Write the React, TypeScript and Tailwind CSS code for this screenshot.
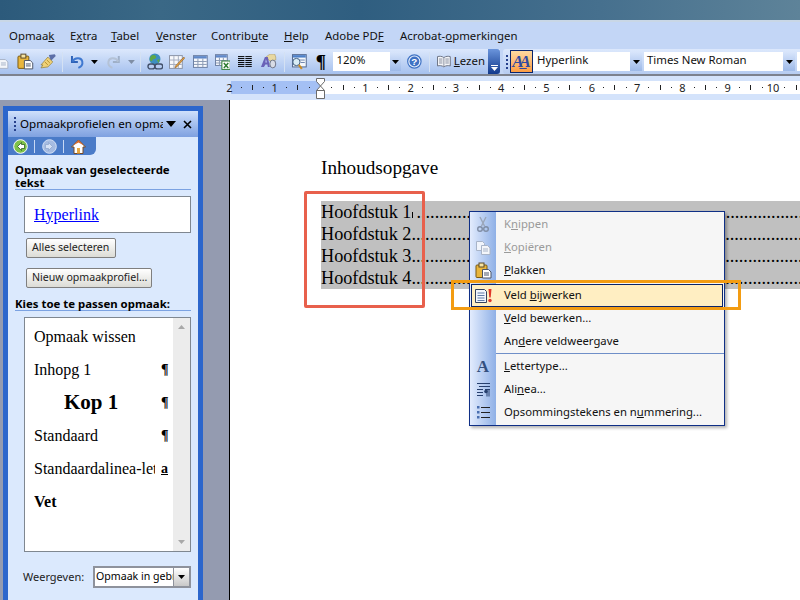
import React from 'react';

const ui = "font-['Noto_Sans',sans-serif]";
const times = "font-['Liberation_Serif',serif]";

const Sep = ({ className = '' }: { className?: string }) => (
  <div className={`h-[20px] w-px bg-[#6f9bd8] border-r border-white/70 ${className}`} />
);

const Arrow = ({ className = '', color = '#000' }: { className?: string; color?: string }) => (
  <svg width="7" height="4" viewBox="0 0 7 4" className={className}><path d="M0 0h7L3.5 4z" fill={color} /></svg>
);

const PasteIcon = ({ className = '' }: { className?: string }) => (
  <svg width="17" height="17" viewBox="0 0 17 17" className={className}>
    <rect x="1" y="3" width="11" height="12.5" rx="1" fill="#e8b53c" stroke="#7a5a12" />
    <rect x="4" y="1" width="5" height="4" fill="#f6e3a0" stroke="#5b4a2a" />
    <path d="M7.5 7.5h6l2.5 2.5v6h-8.500z" fill="#fff" stroke="#4b5568" />
    <path d="M9 11h5M9 13h5" stroke="#4b5568" />
  </svg>
);

const CopyIcon = () => (
  <svg width="16" height="16" viewBox="0 0 16 16">
    <path d="M1.500 1.500h6l2 2v7h-8z" fill="#f0f4fb" stroke="#a8b4c8" />
    <path d="M6.500 5.500h6l2.500 2.500v6.500h-8.500z" fill="#f4f6fa" stroke="#a8b4c8" />
    <path d="M8 9h5M8 11h5" stroke="#a8b4c8" />
  </svg>
);

const TableIcon = ({ className = '' }: { className?: string }) => (
  <svg width="15" height="15" viewBox="0 0 15 15" className={className}>
    <rect x="0.500" y="1.500" width="14" height="12" fill="#f6f8fc" stroke="#6c7fa3" />
    <rect x="1" y="2" width="13" height="2.500" fill="#5f88c9" />
    <path d="M5 4.500v9M10 4.500v9M1 7.500h13M1 10.500h13" stroke="#8b9ab5" />
  </svg>
);

const MenuIcon = ({ name }: { name: string }) => {
  if (name === 'cut')
    return (
      <svg width="16" height="17" viewBox="0 0 16 17">
        <path d="M5 1l4.500 9M11 1L6.500 10" stroke="#9aa5b8" strokeWidth="1.400" fill="none" />
        <circle cx="5" cy="13" r="2.300" fill="none" stroke="#7f8da5" strokeWidth="1.400" />
        <circle cx="11" cy="13" r="2.300" fill="none" stroke="#7f8da5" strokeWidth="1.400" />
      </svg>
    );
  if (name === 'copy') return <CopyIcon />;
  if (name === 'paste') return <PasteIcon />;
  if (name === 'update')
    return (
      <svg width="18" height="16" viewBox="0 0 18 16">
        <path d="M0.500 1.500h9l2 2v11h-11z" fill="#f2f6fd" stroke="#33415e" />
        <path d="M2.500 5h7M2.500 7.500h7M2.500 10h7M2.500 12.500h7" stroke="#5f7ba8" />
        <path d="M13.500 1h3l-.8 8.500h-1.400z" fill="#e0372a" />
        <circle cx="15" cy="12.500" r="1.700" fill="#e0372a" />
      </svg>
    );
  if (name === 'font')
    return <span className={`${times} text-[17px] leading-none font-bold text-[#34507f]`}>A</span>;
  if (name === 'para')
    return (
      <svg width="15" height="15" viewBox="0 0 15 15">
        <path d="M1 1.500h13M3 4.500h11M1 7.500h6M1 10.500h6M1 13.500h6" stroke="#27406e" />
        <path d="M9 7.500h5M11 7.500v7M13 7.500v7" stroke="#27406e" />
        <circle cx="10" cy="9.500" r="1.800" fill="#27406e" />
      </svg>
    );
  if (name === 'list')
    return (
      <svg width="15" height="15" viewBox="0 0 15 15">
        <path d="M5 2.500h9M5 7.500h9M5 12.500h9" stroke="#222" />
        <rect x="1" y="1" width="2.500" height="2.500" fill="#4a6fb0" />
        <rect x="1" y="6" width="2.500" height="2.500" fill="#4a6fb0" />
        <rect x="1" y="11" width="2.500" height="2.500" fill="#4a6fb0" />
      </svg>
    );
  return null;
};

const menuBar: [string, string, string, string][] = [
  ['Opmaa', 'k', '', 'w-[61px]'],
  ['E', 'x', 'tra', 'w-[41px]'],
  ['', 'T', 'abel', 'w-[45px]'],
  ['', 'V', 'enster', 'w-[55px]'],
  ['Contrib', 'u', 'te', 'w-[73px]'],
  ['', 'H', 'elp', 'w-[41px]'],
  ['Adobe PD', 'F', '', 'w-[75px]'],
  ['Acrobat-', 'o', 'pmerkingen', 'w-[130px]'],
];

const MenuItem = ({
  icon,
  pre,
  hot,
  post,
  disabled,
  active,
  className = '',
}: {
  icon: string;
  pre: string;
  hot: string;
  post: string;
  disabled?: boolean;
  active?: boolean;
  className?: string;
}) => (
  <div
    className={`flex h-[23px] items-center text-[11.3px] ${disabled ? 'text-[#9a9a9a]' : 'text-[#111]'} ${
      active ? 'bg-[#ffeec2] outline outline-1 -outline-offset-1 outline-[#0a246a] mx-px' : ''
    } ${className}`}
  >
    <div className={`flex shrink-0 items-center justify-center ${active ? 'w-[25px]' : 'w-[26px]'}`}>
      <MenuIcon name={icon} />
    </div>
    <span className="ml-[8px] whitespace-nowrap">
      {pre}
      <u>{hot}</u>
      {post}
    </span>
  </div>
);

const StyleItem = ({
  children,
  glyph,
  className = '',
}: {
  children: React.ReactNode;
  glyph?: string;
  className?: string;
}) => (
  <div className={`flex h-[33px] items-center pl-[9px] text-[16px] text-black ${times} ${className}`}>
    <div className="flex-1 overflow-hidden whitespace-nowrap">{children}</div>
    <span className="ml-[6px] mr-[3px] w-[9px] shrink-0 text-[14px] font-bold leading-none text-black">
      {glyph === 'a' ? <u>a</u> : glyph}
    </span>
  </div>
);

const Btn = ({ children, className = '' }: { children: React.ReactNode; className?: string }) => (
  <div
    className={`flex h-[20px] items-center whitespace-nowrap rounded-[2px] border border-[#7f7f7f] bg-gradient-to-b from-white to-[#dcdcd6] pl-[5px] text-[10.6px] text-[#222] ${className}`}
  >
    {children}
  </div>
);

const Ruler = () => {
  const unit = 45.3;
  const origin = 320;
  const labels: [number, string][] = [
    [-2, '2'],
    [-1, '1'],
    [1, '1'],
    [2, '2'],
    [3, '3'],
    [4, '4'],
    [5, '5'],
    [6, '6'],
    [7, '7'],
    [8, '8'],
    [9, '9'],
    [10, '10'],
  ];
  const marks: React.ReactNode[] = [];
  for (let i = -8; i <= 44; i++) {
    if (i % 4 === 0) continue;
    const x = Math.round(origin + (i * unit) / 4);
    marks.push(
      i % 2 === 0 ? (
        <rect key={i} x={x} y={85} width={1} height={5} fill="#222" />
      ) : (
        <rect key={i} x={x} y={87} width={1} height={1} fill="#222" />
      ),
    );
  }
  return (
    <svg width="800" height="24" viewBox="0 76 800 24" className="block shrink-0">
      <rect x="0" y="76" width="800" height="24" fill="#d4e3fb" />
      <rect x="231" y="81" width="89" height="13" fill="#a4c0f4" />
      <rect x="320" y="81" width="480" height="13" fill="#fff" />
      {marks}
      {labels.map(([n, t]) => (
        <text
          key={t + n}
          x={origin + n * unit}
          y={91.500}
          textAnchor="middle"
          fontSize="11"
          fontFamily="Noto Sans, sans-serif"
          fill="#222"
        >
          {t}
        </text>
      ))}
      <path d="M316.500 78.500h8v3l-4 4.500 4 4.500v8h-8v-8l4-4.500-4-4.500z" fill="#fff" stroke="#6b6b6b" />
      <path d="M316.500 90.500h8" stroke="#6b6b6b" />
    </svg>
  );
};

export default function App() {
  return (
    <div className={`relative flex h-[600px] w-[800px] flex-col overflow-hidden ${ui}`}>
      <div className="h-[20px] shrink-0 bg-[linear-gradient(90deg,#2c5a7b_0%,#3a6886_20%,#2f5e80_45%,#46708e_75%,#5e8399_100%)]" />
      <div className="h-[2px] shrink-0 bg-[#c9d7e6]" />

      <div className="flex h-[27px] shrink-0 items-center bg-[#c3d6f6] pl-[9px] text-[11.4px] text-[#111]">
        {menuBar.map(([pre, hot, post, w]) => (
          <span key={pre + hot + post} className={`${w} whitespace-nowrap`}>
            {pre}
            <u>{hot}</u>
            {post}
          </span>
        ))}
      </div>

      <div className="flex h-[25px] shrink-0 bg-[#c3d6f6]">
        {/* standard toolbar */}
        <div className="flex h-full w-[500px] shrink-0 items-center bg-gradient-to-b from-[#dce8fc] to-[#a6c1ee]">
          <svg width="9" height="16" viewBox="7 0 9 16">
            <path d="M6.500 5.500h6l2.500 2.500v6.500h-8.500z" fill="#f4f6fa" stroke="#a8b4c8" />
            <path d="M8 9h5M8 11h5" stroke="#a8b4c8" />
          </svg>
          <PasteIcon className="ml-[8px]" />
          <svg width="17" height="16" viewBox="0 0 17 16" className="ml-[6px]">
            <path d="M9 1l6-1 1 2-5 5z" fill="#5c6fa8" />
            <path d="M8 3l5 5-5 5-7 1 2-3-2 0z" fill="#f0d277" stroke="#8d7a3a" strokeWidth="0.700" />
            <path d="M5 8l3 3M7 6l3 3" stroke="#b58f2c" />
          </svg>
          <Sep className="ml-[6px]" />
          <svg width="15" height="15" viewBox="0 0 15 15" className="ml-[7px]">
            <path d="M2 2v6h6" fill="none" stroke="#2f63b8" strokeWidth="2" />
            <path d="M2.500 7.500c2-4 9-5 10 0 .6 3-1.500 5.500-4 6.500" fill="none" stroke="#3f78d0" strokeWidth="2" />
          </svg>
          <Arrow className="ml-[6px]" />
          <svg width="15" height="15" viewBox="0 0 15 15" className="ml-[8px]">
            <path d="M13 2v6H7" fill="none" stroke="#9fb0c8" strokeWidth="2" />
            <path d="M12.500 7.500c-2-4-9-5-10 0-.6 3 1.500 5.500 4 6.500" fill="none" stroke="#b4c2d6" strokeWidth="2" />
          </svg>
          <Arrow className="ml-[7px]" color="#7f8ea5" />
          <Sep className="ml-[5px]" />
          <svg width="17" height="18" viewBox="0 0 17 18" className="ml-[6px]">
            <circle cx="8" cy="6" r="5.700" fill="#3d8fc0" />
            <path d="M4 3c2-2 4-1 5 0s0 3-2 3-1 3-3 2-1-3 0-5zM10 7l3-1-1 4z" fill="#5fa845" />
            <rect x="1" y="11" width="7" height="5" rx="2.500" fill="none" stroke="#42506a" strokeWidth="1.400" />
            <rect x="8" y="11" width="8" height="5" rx="2.500" fill="none" stroke="#42506a" strokeWidth="1.400" />
          </svg>
          <svg width="16" height="16" viewBox="0 0 16 16" className="ml-[6px]">
            <rect x="0.500" y="1.500" width="13" height="13" fill="#f8f9fc" stroke="#8a93a6" />
            <path d="M5 2v12M9.500 2v12M1 6h12M1 10.500h12" stroke="#a4adc0" />
            <path d="M15 3l1 1-8 9-2 1 .5-2z" fill="#e0a040" stroke="#7a4a20" strokeWidth="0.500" />
          </svg>
          <TableIcon className="ml-[8px]" />
          <svg width="16" height="16" viewBox="0 0 16 16" className="ml-[7px]">
            <rect x="0.500" y="0.500" width="12" height="11" fill="#f6f8fc" stroke="#6c7fa3" />
            <rect x="1" y="1" width="11" height="2.500" fill="#5f88c9" />
            <path d="M4.500 3.500v8M8.500 3.500v8M1 6.500h11M1 9h11" stroke="#8b9ab5" />
            <rect x="7" y="7" width="8.500" height="8.500" fill="#fff" stroke="#2f7d32" />
            <path d="M9 9l4.500 5M13.500 9L9 14" stroke="#2f7d32" strokeWidth="1.500" />
          </svg>
          <svg width="14" height="13" viewBox="0 0 14 13" className="ml-[8px]">
            <path d="M0 1.500h6.500M7.500 1.500h6.500M0 3.500h6.500M7.500 3.500h6.500M0 5.500h6.500M7.500 5.500h6.500M0 7.500h6.500M7.500 7.500h6.500M0 9.500h6.500M7.500 9.500h6.500M0 11.500h6.500M7.500 11.500h6.500" stroke="#000" />
          </svg>
          <svg width="17" height="16" viewBox="0 0 17 16" className="ml-[8px]">
            <path d="M6 3l4-3h5l1 3v3l-6 1z" fill="#e8d8a0" stroke="#a08a50" strokeWidth="0.500" />
            <path d="M5 3h3l2 10H8l-.5-2.500h-2L4 13H1zM6 5l-.5 3.500h1.500z" fill="#6a62b8" />
            <ellipse cx="13" cy="10" rx="3" ry="4" fill="#d8dce6" stroke="#6e7488" />
          </svg>
          <Sep className="ml-[7px]" />
          <svg width="16" height="16" viewBox="0 0 16 16" className="ml-[6px]">
            <rect x="1.500" y="0.500" width="14" height="12.500" fill="#f4f7fc" stroke="#52688f" />
            <rect x="2" y="1" width="13" height="2.500" fill="#4d80c8" />
            <path d="M9 6h5M10 8.500h4" stroke="#6f86ad" />
            <circle cx="5.500" cy="8" r="3.700" fill="#d8ecf6" stroke="#3d5c80" />
            <path d="M8 11l3 4" stroke="#c98a20" strokeWidth="2" />
          </svg>
          <span className={`${times} ml-[9px] w-[12px] text-[19px] font-bold leading-none text-black`}>¶</span>
          <div className="ml-[6px] flex h-[19px] w-[69px] items-center bg-white">
            <span className="flex-1 pb-[3px] pl-[3px] text-[11.4px] text-[#111]">120%</span>
            <div className="flex h-full w-[11px] items-center justify-center bg-gradient-to-b from-[#d8e5fb] to-[#9db9e8]">
              <Arrow />
            </div>
          </div>
          <svg width="15" height="15" viewBox="0 0 15 15" className="ml-[6px]">
            <circle cx="7.500" cy="7.500" r="6.800" fill="#e8f0fc" stroke="#3f72c4" strokeWidth="1.200" />
            <circle cx="7.500" cy="7.500" r="5" fill="#3f72c4" />
            <text x="7.500" y="11" textAnchor="middle" fontSize="10" fontWeight="bold" fontFamily="Liberation Sans, sans-serif" fill="#fff">?</text>
          </svg>
          <Sep className="ml-[7px]" />
          <svg width="14" height="13" viewBox="0 0 14 13" className="ml-[7px]">
            <path d="M7 2.500C5 1 2.500 1 .500 1.500v9.500c2-.5 4.500-.5 6.500 1 2-1.500 4.500-1.500 6.500-1V1.500C11.500 1 9 1 7 2.500z" fill="#f4f5f8" stroke="#6d7486" />
            <path d="M7 3v9M2 4h3.500M2 6h3.500M2 8h3.500M8.500 4H12M8.500 6H12M8.500 8H12" stroke="#8a90a0" />
          </svg>
          <span className="ml-[3px] w-[35px] pb-[2px] text-[11.4px] text-[#111]">
            <u>L</u>ezen
          </span>
          <div className="flex h-full w-[12px] flex-col items-center justify-end rounded-r-[3px] bg-gradient-to-b from-[#6b95dc] to-[#12398c] pb-[3px]">
            <div className="mb-px h-px w-[7px] bg-white" />
            <Arrow color="#fff" />
          </div>
        </div>

        {/* formatting toolbar */}
        <div className="ml-[3px] flex h-full flex-1 items-center rounded-l-[3px] bg-gradient-to-b from-[#dce8fc] to-[#b6ccf1]">
          <div className="ml-[3px] flex h-[14px] flex-col justify-between">
            <div className="h-[2px] w-[2px] bg-[#27418c]" />
            <div className="h-[2px] w-[2px] bg-[#27418c]" />
            <div className="h-[2px] w-[2px] bg-[#27418c]" />
            <div className="h-[2px] w-[2px] bg-[#27418c]" />
          </div>
          <div className={`${times} ml-[2px] flex h-[23px] w-[23px] items-center justify-center border border-[#0a246a] bg-gradient-to-b from-[#fcd9a0] to-[#fb9d44] text-[17px] font-bold italic leading-none tracking-[-4px] text-[#2f4aa0]`}>
            <span className="pr-[4px]">
              A<u>A</u>
            </span>
          </div>
          <div className="flex h-[19px] w-[109px] items-center bg-white">
            <span className="flex-1 pb-[3px] pl-[4px] text-[11.4px] text-[#111]">Hyperlink</span>
            <div className="flex h-full w-[12px] items-center justify-center bg-gradient-to-b from-[#d8e5fb] to-[#9db9e8]">
              <Arrow />
            </div>
          </div>
          <div className="ml-[2px] flex h-[19px] w-[151px] items-center bg-white">
            <span className="flex-1 pb-[3px] pl-[3px] text-[11.4px] text-[#111]">Times New Roman</span>
            <div className="flex h-full w-[12px] items-center justify-center bg-gradient-to-b from-[#d8e5fb] to-[#9db9e8]">
              <Arrow />
            </div>
          </div>
          <div className="ml-[2px] h-[19px] flex-1 bg-white" />
        </div>
      </div>

      <div className="h-[2px] shrink-0 bg-[#7d828e]" />
      <Ruler />

      <div className="flex min-h-0 flex-1">
        {/* task pane */}
        <div className="w-[230px] shrink-0 border-r border-black bg-[#949bb0] pl-[3px] pt-[6px]">
          <div className="h-full w-[200px] bg-[#2c66cc] px-[5px] pt-[5px]">
            <div className="h-full bg-[#dbe9fd]">
              <div className="flex h-[26px] items-center bg-gradient-to-b from-[#cfe0fb] to-[#7fa1e0] pl-[6px]">
                <div className="flex h-[14px] flex-col justify-between">
                  <div className="h-[2px] w-[2px] bg-[#27418c]" />
                  <div className="h-[2px] w-[2px] bg-[#27418c]" />
                  <div className="h-[2px] w-[2px] bg-[#27418c]" />
                  <div className="h-[2px] w-[2px] bg-[#27418c]" />
                </div>
                <span className="ml-[4px] w-[143px] overflow-hidden whitespace-nowrap text-[11.6px] text-black">
                  Opmaakprofielen en opmaak
                </span>
                <svg width="10" height="6" viewBox="0 0 10 6" className="ml-[3px]">
                  <path d="M0 0h10L5 6z" fill="#000" />
                </svg>
                <svg width="9" height="9" viewBox="0 0 9 9" className="ml-[7px]">
                  <path d="M1 1l7 7M8 1L1 8" stroke="#000" strokeWidth="1.600" />
                </svg>
              </div>

              <div className="flex h-[18px] w-[88px] items-center rounded-br-[6px] bg-[#4a7bc8] pl-[5px]">
                <svg width="15" height="15" viewBox="0 0 15 15">
                  <circle cx="7.500" cy="7.500" r="6.800" fill="#7fc24a" stroke="#fff" />
                  <path d="M8.500 3.500L4.500 7.500l4 4V9.500h3v-4h-3z" fill="#fff" stroke="#1d4d12" strokeWidth="0.700" />
                </svg>
                <div className="ml-[6px] h-[13px] w-px bg-[#c8d8f4]" />
                <svg width="15" height="15" viewBox="0 0 15 15" className="ml-[7px]">
                  <circle cx="7.500" cy="7.500" r="6.800" fill="#a6bce2" stroke="#d6e2f6" />
                  <path d="M6.500 3.500l4 4-4 4V9.500h-3v-4h3z" fill="#d6e2f6" stroke="#8ba2ca" strokeWidth="0.700" />
                </svg>
                <div className="ml-[6px] h-[13px] w-px bg-[#c8d8f4]" />
                <svg width="15" height="15" viewBox="0 0 15 15" className="ml-[7px]">
                  <path d="M7.500 1L0.500 8H3v6.500h9V8h2.500z" fill="#fff" stroke="#7a4a20" />
                  <path d="M2 6.500L7.500 1 13 6.500 7.500 3.500z" fill="#d8682a" />
                  <rect x="6" y="9" width="3" height="5.500" fill="#e8a840" />
                </svg>
              </div>

              <div className="px-[7px] pt-[8px]">
                <div className="border-b border-[#7ba2e2] text-[11.4px] font-bold leading-[13px] text-black">
                  Opmaak van geselecteerde tekst
                </div>
                <div className={`${times} ml-[9px] mt-[6px] flex h-[37px] items-center border border-[#7f8790] bg-white pl-[9px] text-[16px] text-[#0000ff] underline`}>
                  Hyperlink
                </div>
                <Btn className="ml-[11px] mt-[5px] w-[90px]">Alles selecteren</Btn>
                <Btn className="ml-[11px] mt-[10px] w-[126px]">Nieuw opmaakprofiel...</Btn>
                <div className="mt-[9px] border-b border-[#7ba2e2] text-[11.4px] font-bold leading-[13px] text-black">
                  Kies toe te passen opmaak:
                </div>
                <div className="ml-[9px] mt-[6px] flex h-[235px] border border-[#7f8790] bg-white">
                  <div className="min-w-0 flex-1 pt-[2px]">
                    <StyleItem>Opmaak wissen</StyleItem>
                    <StyleItem glyph="¶">Inhopg 1</StyleItem>
                    <StyleItem glyph="¶" className="pl-[39px]">
                      <span className="text-[21px] font-bold">Kop 1</span>
                    </StyleItem>
                    <StyleItem glyph="¶">Standaard</StyleItem>
                    <StyleItem glyph="a">Standaardalinea-lettertype</StyleItem>
                    <StyleItem>
                      <b>Vet</b>
                    </StyleItem>
                  </div>
                  <div className="flex w-[17px] shrink-0 flex-col items-center justify-between bg-[#ececec] py-[7px]">
                    <svg width="7" height="4" viewBox="0 0 7 4"><path d="M0 4h7L3.500 0z" fill="#a8a8a8" /></svg>
                    <Arrow color="#a8a8a8" />
                  </div>
                </div>
                <div className="mt-[14px] flex h-[22px] items-center text-[11px] text-[#222]">
                  <span className="ml-[8px] w-[70px]">Weergeven:</span>
                  <div className="flex h-full w-[98px] items-center border-2 border-[#8e929c] bg-white">
                    <span className="w-[78px] overflow-hidden whitespace-nowrap pl-px text-[10.6px] text-black">Opmaak in gebruik</span>
                    <div className="flex h-full flex-1 items-center justify-center border-l border-[#8e929c] bg-gradient-to-b from-white to-[#c8c8c8]">
                      <Arrow />
                    </div>
                  </div>
                </div>
              </div>
            </div>
          </div>
        </div>

        {/* document page */}
        <div className={`min-w-0 flex-1 bg-white pl-[91px] pt-[57px] text-black ${times}`}>
          <div className="text-[19.2px] leading-[22px]">Inhoudsopgave</div>
          <div className="mt-[22px] bg-[#c0c0c0] text-[18.2px] leading-[22px]">
            {['1', '2', '3', '4'].map((n) => (
              <div key={n} className="flex items-center overflow-hidden whitespace-nowrap">
                Hoofdstuk {n}
                {n === '1' && <span className="ml-px mr-[3px] mt-[5px] h-[6px] w-px shrink-0 bg-black" />}
                {'.'.repeat(90)}
              </div>
            ))}
          </div>
        </div>
      </div>

      {/* context menu */}
      <div className="absolute left-[469px] top-[211px] flex h-[215px] w-[256px] flex-col border border-[#0f2f86] bg-[#f6f6f6] pt-px shadow-[2px_2px_3px_rgba(0,0,0,0.3)]">
        <div className="absolute bottom-0 left-0 top-0 w-[26px] bg-gradient-to-r from-[#e3ecfd] to-[#8fb0e6]" />
        <div className="relative">
          <MenuItem icon="cut" pre="K" hot="n" post="ippen" disabled />
          <MenuItem icon="copy" pre="" hot="K" post="opiëren" disabled />
          <MenuItem icon="paste" pre="" hot="P" post="lakken" />
          <MenuItem icon="update" pre="Veld " hot="b" post="ijwerken" active className="mt-[2px]" />
          <MenuItem icon="" pre="" hot="V" post="eld bewerken..." />
          <MenuItem icon="" pre="An" hot="d" post="ere veldweergave" />
          <div className="mb-px ml-[26px] h-px bg-[#6f8fc8]" />
          <MenuItem icon="font" pre="" hot="L" post="ettertype..." />
          <MenuItem icon="para" pre="Ali" hot="n" post="ea..." />
          <MenuItem icon="list" pre="Opsommingstekens en n" hot="u" post="mmering..." />
        </div>
      </div>

      {/* annotations */}
      <div className="absolute left-[304px] top-[191px] h-[117px] w-[121px] rounded-[2px] border-[3px] border-[#e8604c]" />
      <div className="absolute left-[451px] top-[280px] h-[30px] w-[290px] border-[3px] border-[#f39c12]" />
    </div>
  );
}
